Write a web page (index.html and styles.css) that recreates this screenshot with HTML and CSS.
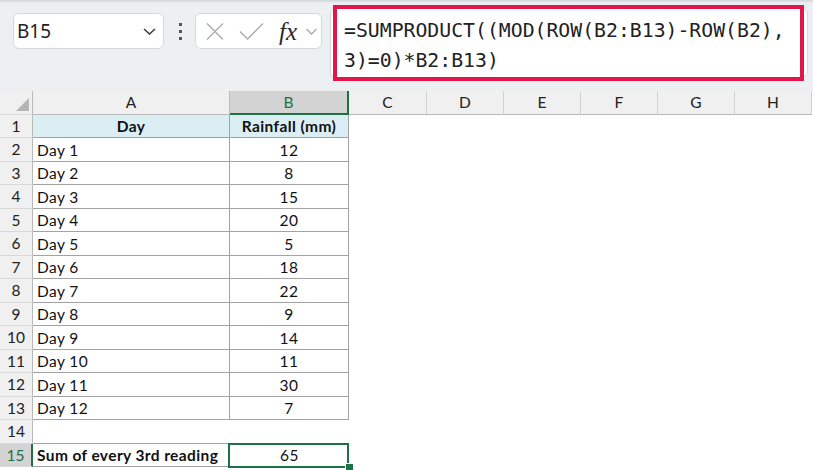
FILE: index.html
```html
<!DOCTYPE html>
<html lang="en">
<head>
  <meta charset="UTF-8">
  <meta name="viewport" content="width=device-width, initial-scale=1.0">
  <title>Rainfall - Sum of every 3rd reading</title>
  <link rel="stylesheet" href="styles.css">
</head>
<body>

  <div class="formula-bar">
    <div class="name-box">
      <span>B15</span>
      <svg class="chev" width="13" height="7" viewBox="0 0 13 7"><path d="M1 1l5.5 5 5.5-5" fill="none" stroke="#333" stroke-width="1.4"/></svg>
    </div>
    <div class="grip"><i></i><i></i><i></i></div>
    <div class="fx-box">
      <svg class="cancel" width="18" height="17" viewBox="0 0 18 17"><path d="M1 0.5l16 16M17 0.5l-16 16" fill="none" stroke="#ababab" stroke-width="1.3"/></svg>
      <svg class="enter" width="25" height="17" viewBox="0 0 25 17"><path d="M1 8.5l7.5 7.5 15.5-15.5" fill="none" stroke="#ababab" stroke-width="1.3"/></svg>
      <span class="fx">fx</span>
      <svg class="chev" width="11" height="7" viewBox="0 0 11 7"><path d="M0.5 1l5 5 5-5" fill="none" stroke="#aaa" stroke-width="1.3"/></svg>
    </div>
    <div class="formula">
      =SUMPRODUCT((MOD(ROW(B2:B13)-ROW(B2),<br>3)=0)*B2:B13)
      <div class="highlight"></div>
    </div>
  </div>

  <table class="sheet">
    <colgroup>
      <col class="c-head">
      <col class="c-a">
      <col class="c-b">
      <col class="c-c">
      <col class="c-n"><col class="c-n"><col class="c-n"><col class="c-n"><col class="c-n">
    </colgroup>
    <tr class="col-heads">
      <th class="corner"><span class="tri"></span></th>
      <th class="a-b">A</th><th class="sel">B</th><th>C</th><th>D</th><th>E</th><th>F</th><th>G</th><th>H</th>
    </tr>
    <tr><th>1</th><td class="t title">Day</td><td class="t title">Rainfall (mm)</td><td></td><td></td><td></td><td></td><td></td><td></td></tr>
    <tr><th>2</th><td class="t">Day 1</td><td class="t num">12</td><td></td><td></td><td></td><td></td><td></td><td></td></tr>
    <tr><th>3</th><td class="t">Day 2</td><td class="t num">8</td><td></td><td></td><td></td><td></td><td></td><td></td></tr>
    <tr><th>4</th><td class="t">Day 3</td><td class="t num">15</td><td></td><td></td><td></td><td></td><td></td><td></td></tr>
    <tr><th>5</th><td class="t">Day 4</td><td class="t num">20</td><td></td><td></td><td></td><td></td><td></td><td></td></tr>
    <tr><th>6</th><td class="t">Day 5</td><td class="t num">5</td><td></td><td></td><td></td><td></td><td></td><td></td></tr>
    <tr><th>7</th><td class="t">Day 6</td><td class="t num">18</td><td></td><td></td><td></td><td></td><td></td><td></td></tr>
    <tr><th>8</th><td class="t">Day 7</td><td class="t num">22</td><td></td><td></td><td></td><td></td><td></td><td></td></tr>
    <tr><th>9</th><td class="t">Day 8</td><td class="t num">9</td><td></td><td></td><td></td><td></td><td></td><td></td></tr>
    <tr><th>10</th><td class="t">Day 9</td><td class="t num">14</td><td></td><td></td><td></td><td></td><td></td><td></td></tr>
    <tr><th>11</th><td class="t">Day 10</td><td class="t num">11</td><td></td><td></td><td></td><td></td><td></td><td></td></tr>
    <tr><th>12</th><td class="t">Day 11</td><td class="t num">30</td><td></td><td></td><td></td><td></td><td></td><td></td></tr>
    <tr><th>13</th><td class="t">Day 12</td><td class="t num">7</td><td></td><td></td><td></td><td></td><td></td><td></td></tr>
    <tr><th>14</th><td class="under"></td><td></td><td></td><td></td><td></td><td></td><td></td><td></td></tr>
    <tr><th class="sel">15</th><td class="t bold">Sum of every 3rd reading</td><td class="num active">65<span class="sel-box"></span><span class="handle"></span></td><td></td><td></td><td></td><td></td><td></td><td></td></tr>
  </table>

</body>
</html>
```

FILE: styles.css
```css
body {
  margin: 0;
  width: 813px;
  height: 470px;
  overflow: hidden;
  background: #fff;
}

/* formula bar */
.formula-bar {
  display: flex;
  align-items: flex-start;
  height: 91px;
  padding-left: 13px;
  box-sizing: border-box;
  background: #edf0f3;
  box-shadow: inset 0 3px 3px -2px #c9ccd0;
}
.name-box {
  display: flex;
  align-items: center;
  justify-content: space-between;
  width: 151px;
  height: 36px;
  margin-top: 13px;
  padding: 0 7px 0 3px;
  box-sizing: border-box;
  background: #fff;
  border: 1px solid #d5d8dc;
  border-radius: 6px;
  font-family: "Noto Sans", sans-serif;
  font-size: 19px;
  color: #222;
}
.grip {
  display: flex;
  flex-direction: column;
  gap: 4px;
  margin: 23px 13px 0 15px;
}
.grip i {
  width: 3px;
  height: 3px;
  background: #555;
}
.fx-box {
  display: flex;
  align-items: center;
  width: 127px;
  height: 36px;
  margin-top: 13px;
  padding-left: 10px;
  box-sizing: border-box;
  background: #fff;
  border: 1px solid #d5d8dc;
  border-radius: 6px;
}
.fx-box .enter {
  margin-left: 15px;
}
.fx {
  margin-left: 15px;
  font-family: "Liberation Serif", serif;
  font-style: italic;
  font-size: 25px;
  color: #2a2a2a;
  line-height: 1;
}
.fx-box .chev {
  margin-left: 9px;
}
.formula {
  position: relative;
  width: 478px;
  height: 70px;
  margin: 8px 0 0 8px;
  padding: 7px 0 0 13px;
  box-sizing: border-box;
  background: #fff;
  border: 1px solid #d5d8dc;
  border-radius: 6px;
  font-family: "DejaVu Sans Mono", monospace;
  font-size: 19.8px;
  line-height: 29.5px;
  color: #222;
  white-space: nowrap;
}
.highlight {
  position: absolute;
  left: 2px;
  right: 3px;
  top: -4px;
  bottom: -4px;
  border: 4px solid #e0174a;
}

/* grid */
.sheet {
  table-layout: fixed;
  width: 812px;
  border-collapse: separate;
  border-spacing: 0;
  font-family: Lato, "Liberation Sans", sans-serif;
  font-size: 15.5px;
  letter-spacing: 0.4px;
  color: #111;
}
.c-head { width: 33px; }
.c-a { width: 197px; }
.c-b { width: 119px; }
.c-c { width: 78px; }
.c-n { width: 77px; }

.sheet th,
.sheet td {
  padding: 0;
  box-sizing: border-box;
  white-space: nowrap;
  overflow: visible;
}
.sheet th {
  font-weight: normal;
  background: #f0f0f0;
  color: #222;
  letter-spacing: 0;
}
.col-heads th {
  height: 22px;
  border-right: 1px solid #d2d2d2;
  border-bottom: 1px solid #b9b9b9;
}
.col-heads th.a-b {
  border-right-color: #bdbdbd;
}
.col-heads th.sel {
  background: #d3d3d3;
  color: #1e7145;
  border-bottom: 2px solid #1e7145;
}
.corner {
  position: relative;
}
.tri {
  position: absolute;
  right: 3px;
  bottom: 3px;
  width: 0;
  height: 0;
  border-left: 13px solid transparent;
  border-bottom: 13px solid #b5b5b5;
}
.sheet tr {
  height: 23.5px;
}
.sheet tr th:first-child {
  border-right: 1px solid #b9b9b9;
  border-bottom: 1px solid #d9d9d9;
  text-align: center;
}
.sheet tr th.sel {
  background: #d3d3d3;
  color: #1e7145;
  border-right: 2px solid #1e7145;
}
.col-heads th.corner {
  border-right: 1px solid #b9b9b9;
}

.sheet td.t {
  padding: 1px 0 0 4px;
  border-right: 1px solid #a3a3a3;
  border-bottom: 1px solid #a3a3a3;
}
.sheet td.title {
  background: #daeef3;
  font-weight: bold;
  text-align: center;
  padding-left: 0;
}
.sheet td.num {
  text-align: center;
  padding-left: 0;
}
.bold {
  font-weight: bold;
}
.under {
  border-bottom: 1px solid #a3a3a3;
}
.active {
  position: relative;
  padding-top: 1px;
}
.sel-box {
  position: absolute;
  left: -2px;
  top: -1px;
  right: 0;
  bottom: -1px;
  border: 2px solid #1e7145;
}
.handle {
  position: absolute;
  right: -5px;
  bottom: -5px;
  width: 7px;
  height: 7px;
  background: #1e7145;
  border: 1px solid #fff;
}
```
